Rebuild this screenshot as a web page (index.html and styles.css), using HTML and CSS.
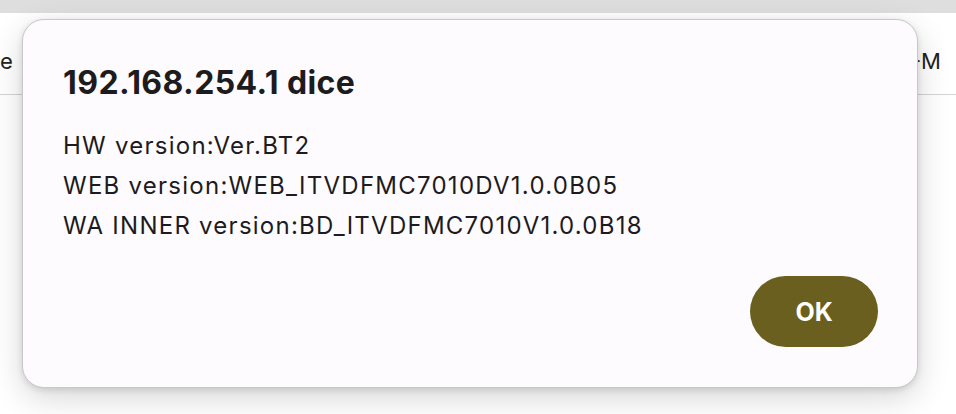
FILE: index.html
```html
<!DOCTYPE html>
<html lang="en">

<head>
    <meta charset="utf-8">
    <meta name="viewport" content="width=device-width, initial-scale=1.0">
    <title>Info</title>
    <link rel="stylesheet" href="styles.css">
</head>

<body>

    <div class="topbar"></div>
    <header class="page_head">
        <span class="left_word">e</span>
        <span class="right_word">-M</span>
    </header>

    <section class="dialog">
        <h1>192.168.254.1 dice</h1>
        <div class="message">
            <p>HW version:Ver.BT2</p>
            <p>WEB version:WEB_ITVDFMC7010DV1.0.0B05</p>
            <p>WA INNER version:BD_ITVDFMC7010V1.0.0B18</p>
        </div>
        <div class="actions">
            <button class="ok">OK</button>
        </div>
    </section>

</body></html>
```

FILE: styles.css
```css
* {
    box-sizing: border-box;
}

body {
    margin: 0;
    background: #fff;
    font-family: 'Inter', 'Noto Sans', sans-serif;
    color: #1d1b1e;
    overflow: hidden;
}

.topbar {
    height: 13px;
    background: #dedede;
}

.page_head {
    height: 82px;
    border-bottom: 1px solid #d4d4d4;
    display: flex;
    justify-content: space-between;
    align-items: flex-start;
    font-size: 22px;
    line-height: 26px;
    color: #222;
    padding: 35px 15px 0 0;
}

.left_word {
    margin-left: 0;
}

.dialog {
    position: absolute;
    left: 22px;
    top: 19px;
    width: 896px;
    height: 369px;
    background: #fdfbfd;
    border-radius: 22px;
    border: 1px solid #c9c7c9;
    box-shadow: 0 10px 32px rgba(0, 0, 0, 0.16), 0 2px 6px rgba(0, 0, 0, 0.12);
    padding: 43px 39px 40px 40px;
    display: flex;
    flex-direction: column;
}

h1 {
    margin: 0;
    font-size: 32px;
    line-height: 40px;
    font-weight: 700;
    letter-spacing: 0.4px;
}

.message {
    margin-top: 23px;
}

p {
    margin: 0;
    font-size: 24px;
    line-height: 40px;
    letter-spacing: 1.25px;
}

.actions {
    margin-top: auto;
    display: flex;
    justify-content: flex-end;
}

.ok {
    width: 128px;
    height: 71px;
    border: none;
    border-radius: 36px;
    background: #6a5f1e;
    color: #fff;
    font-family: 'Inter', 'Noto Sans', sans-serif;
    font-size: 25px;
    font-weight: 700;
}
```
